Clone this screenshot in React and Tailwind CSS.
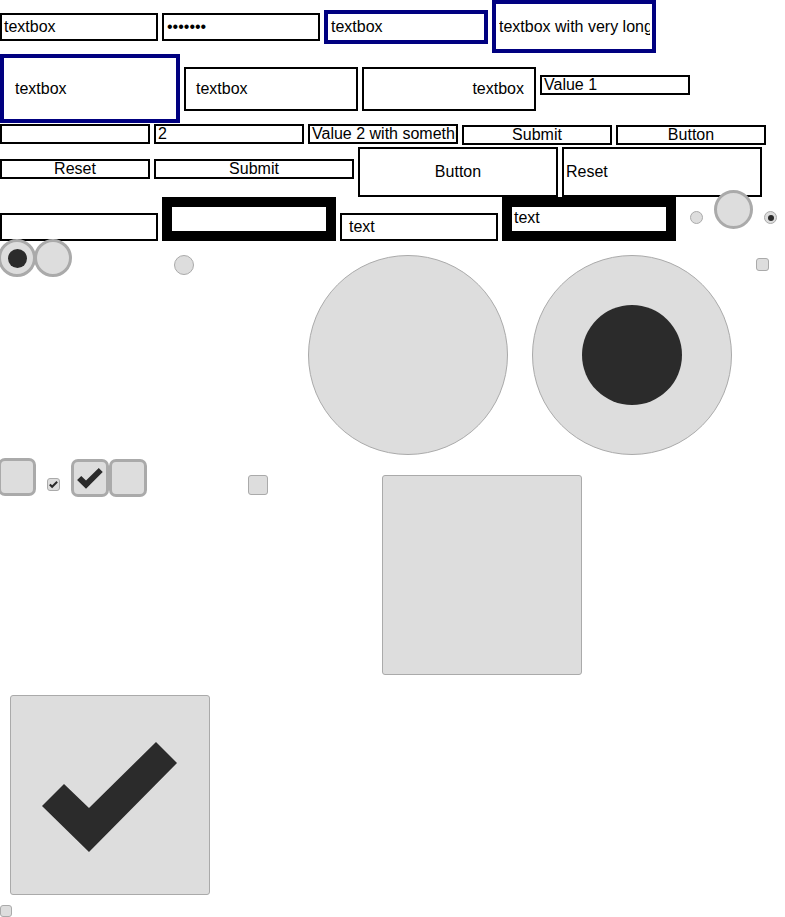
const CHECK = '32,111 54,89 79,113 146,47 167,68 79,157';

const Check = ({ size, border }) => {
  const k = 200 / size;
  const c = size - 2 * border;
  return (
    <svg viewBox={`${border * k} ${border * k} ${c * k} ${c * k}`} className="block w-full h-full">
      <polygon points={CHECK} fill="#2b2b2b" />
    </svg>
  );
};

const Radio = ({ className, dot }) => (
  <div
    className={`shrink-0 rounded-full bg-[#dddddd] border-[#aaaaaa] flex items-center justify-center ${className}`}
  >
    {dot && <div className={`rounded-full bg-[#2b2b2b] ${dot}`} />}
  </div>
);

const Checkbox = ({ className, size, border, checked }) => (
  <div className={`shrink-0 bg-[#dddddd] border-[#aaaaaa] overflow-hidden ${className}`}>
    {checked && <Check size={size} border={border} />}
  </div>
);

const Field = ({ className, children }) => (
  <div className={`shrink-0 flex items-center overflow-hidden whitespace-nowrap bg-white ${className}`}>
    {children}
  </div>
);

const Small = ({ className, children }) => (
  <div
    className={`shrink-0 h-[20px] border-2 border-black overflow-hidden whitespace-nowrap leading-4 bg-white ${className}`}
  >
    {children}
  </div>
);

export default function App() {
  return (
    <div className="w-[785px] h-[917px] overflow-hidden bg-white text-black text-[16px] font-['Liberation_Sans',Arial,sans-serif]">
      {/* text inputs */}
      <div className="flex items-start h-[54px]">
        <Field className="mt-[13px] w-[158px] h-[28px] border-2 border-black pl-[2px]">textbox</Field>
        <Field className="mt-[13px] ml-[4px] w-[158px] h-[28px] border-2 border-black pl-[3px]">•••••••</Field>
        <Field className="mt-[10px] ml-[4px] w-[164px] h-[34px] border-4 border-[#000080] pl-[3px]">textbox</Field>
        <Field className="ml-[4px] w-[164px] h-[53px] border-4 border-[#000080] pl-[3px] pr-[2px]">
          <div className="flex-1 overflow-hidden">textbox with very long text</div>
        </Field>
      </div>

      <div className="flex items-start h-[70px]">
        <Field className="w-[180px] h-[69px] border-4 border-[#000080] pl-[11px]">textbox</Field>
        <Field className="mt-[13px] ml-[4px] w-[174px] h-[44px] border-2 border-black pl-[10px]">textbox</Field>
        <Field className="mt-[13px] ml-[4px] w-[174px] h-[44px] border-2 border-black pr-[10px] justify-end">
          textbox
        </Field>
        <Small className="mt-[21px] ml-[4px] w-[150px] pl-[2px]">Value 1</Small>
      </div>

      {/* selects and buttons */}
      <div className="flex items-start h-[23px]">
        <Small className="w-[150px]" />
        <Small className="ml-[4px] w-[150px] pl-[2px]">2</Small>
        <Small className="ml-[4px] w-[150px] pl-[2px]">Value 2 with something</Small>
        <Small className="mt-[1px] ml-[4px] w-[150px] text-center">Submit</Small>
        <Small className="mt-[1px] ml-[4px] w-[150px] text-center">Button</Small>
      </div>

      <div className="flex items-start h-[50px]">
        <Small className="mt-[12px] w-[150px] text-center">Reset</Small>
        <Small className="mt-[12px] ml-[4px] w-[200px] text-center">Submit</Small>
        <Field className="ml-[4px] w-[200px] h-[50px] border-2 border-black justify-center">Button</Field>
        <Field className="ml-[4px] w-[200px] h-[50px] border-2 border-black pl-[2px]">Reset</Field>
      </div>

      {/* thick borders and small radios */}
      <div className="flex items-start h-[44px]">
        <Field className="mt-[16px] w-[158px] h-[28px] border-2 border-black" />
        <Field className="ml-[4px] w-[174px] h-[44px] border-[10px] border-black" />
        <Field className="mt-[16px] ml-[4px] w-[158px] h-[28px] border-2 border-black pl-[7px]">text</Field>
        <Field className="ml-[4px] w-[174px] h-[44px] border-[10px] border-black pl-[2px] pt-[3px] !items-start leading-4">
          text
        </Field>
        <Radio className="mt-[14px] ml-[14px] w-[13px] h-[13px] border" />
        <Radio className="mt-[-7px] ml-[11px] w-[39px] h-[39px] border-[3px]" />
        <Radio className="mt-[14px] ml-[11px] w-[13px] h-[13px] border" dot="w-[6px] h-[6px]" />
      </div>

      {/* radios */}
      <div className="flex items-start h-[214px]">
        <Radio className="mt-[-2px] ml-[-2px] w-[38px] h-[38px] border-[3px]" dot="w-[19px] h-[19px]" />
        <Radio className="mt-[-2px] ml-[-2px] w-[38px] h-[38px] border-[3px]" />
        <Radio className="mt-[14px] ml-[102px] w-[20px] h-[20px] border" />
        <Radio className="mt-[14px] ml-[114px] w-[200px] h-[200px] border" />
        <Radio className="mt-[14px] ml-[24px] w-[200px] h-[200px] border" dot="w-[100px] h-[100px]" />
        <Checkbox className="mt-[17px] ml-[24px] w-[13px] h-[13px] border rounded-[3px]" />
      </div>

      {/* checkboxes */}
      <div className="flex items-start h-[220px]">
        <Checkbox className="mt-[3px] ml-[-2px] w-[38px] h-[38px] border-[3px] rounded-[7px]" />
        <Checkbox
          className="mt-[23px] ml-[11px] w-[13px] h-[13px] border rounded-[3px]"
          size={13}
          border={1}
          checked
        />
        <Checkbox
          className="mt-[4px] ml-[11px] w-[38px] h-[38px] border-[3px] rounded-[7px]"
          size={38}
          border={3}
          checked
        />
        <Checkbox className="mt-[4px] w-[38px] h-[38px] border-[3px] rounded-[7px]" />
        <Checkbox className="mt-[20px] ml-[101px] w-[20px] h-[20px] border rounded-[3px]" />
        <Checkbox className="mt-[20px] ml-[114px] w-[200px] h-[200px] border rounded-[3px]" />
      </div>

      <div className="pt-[20px] pl-[10px]">
        <Checkbox className="w-[200px] h-[200px] border rounded-[3px]" size={200} border={1} checked />
      </div>
      <div className="pt-[10px]">
        <Checkbox className="w-[12px] h-[12px] border rounded-[3px]" />
      </div>
    </div>
  );
}
